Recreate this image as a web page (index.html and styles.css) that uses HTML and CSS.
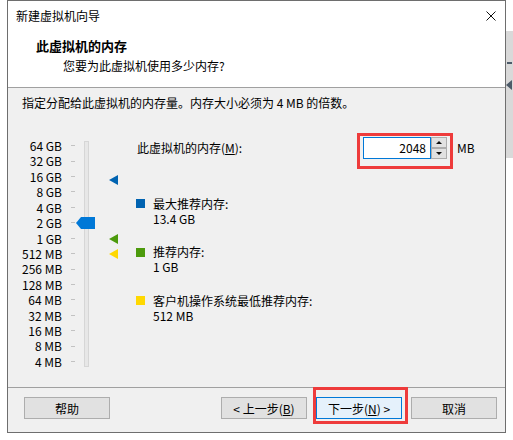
FILE: index.html
```html
<!DOCTYPE html>
<html lang="zh-CN">
<head>
  <meta charset="UTF-8">
  <title>新建虚拟机向导</title>
  <link rel="stylesheet" href="styles.css">
</head>
<body>
  <div class="screen">
    <div class="dialog">
      <div class="titlebar">
        <span>新建虚拟机向导</span>
        <svg class="close" width="10" height="10" viewBox="0 0 10 10">
          <path d="M0.5 0.5 L9.5 9.5 M9.5 0.5 L0.5 9.5" stroke="#111" stroke-width="1" fill="none"/>
        </svg>
      </div>
      <div class="header">
        <div class="header-title">此虚拟机的内存</div>
        <div class="header-sub">您要为此虚拟机使用多少内存?</div>
      </div>

      <div class="content">
        <p class="intro">指定分配给此虚拟机的内存量。内存大小必须为 4 MB 的倍数。</p>
        <div class="main">
          <div class="slider">
            <div class="scale">
              <div class="scale-row"><span class="scale-label">64 GB</span><span class="tick"></span></div>
              <div class="scale-row"><span class="scale-label">32 GB</span><span class="tick"></span></div>
              <div class="scale-row"><span class="scale-label">16 GB</span><span class="tick"></span></div>
              <div class="scale-row"><span class="scale-label">8 GB</span><span class="tick"></span></div>
              <div class="scale-row"><span class="scale-label">4 GB</span><span class="tick"></span></div>
              <div class="scale-row"><span class="scale-label">2 GB</span><span class="tick"></span></div>
              <div class="scale-row"><span class="scale-label">1 GB</span><span class="tick"></span></div>
              <div class="scale-row"><span class="scale-label">512 MB</span><span class="tick"></span></div>
              <div class="scale-row"><span class="scale-label">256 MB</span><span class="tick"></span></div>
              <div class="scale-row"><span class="scale-label">128 MB</span><span class="tick"></span></div>
              <div class="scale-row"><span class="scale-label">64 MB</span><span class="tick"></span></div>
              <div class="scale-row"><span class="scale-label">32 MB</span><span class="tick"></span></div>
              <div class="scale-row"><span class="scale-label">16 MB</span><span class="tick"></span></div>
              <div class="scale-row"><span class="scale-label">8 MB</span><span class="tick"></span></div>
              <div class="scale-row"><span class="scale-label">4 MB</span><span class="tick"></span></div>
            </div>
            <div class="rail">
              <div class="track"></div>
              <svg class="thumb" style="top: 79px" width="19" height="12" viewBox="0 0 19 12">
                <polygon points="0,6 5,0 19,0 19,12 5,12" fill="#0078d7"/>
              </svg>
              <div class="marker marker-max" style="top: 36.5px"></div>
              <div class="marker marker-rec" style="top: 95.5px"></div>
              <div class="marker marker-min" style="top: 110.5px"></div>
            </div>
          </div>

          <div class="settings">
            <div class="memory-row">
              <label class="memory-label">此虚拟机的内存(<u>M</u>):</label>
              <div class="highlight">
                <div class="memory-input">2048</div>
                <div class="spinner">
                  <div class="spin-btn"><span class="arrow-up"></span></div>
                  <div class="spin-btn"><span class="arrow-down"></span></div>
                </div>
              </div>
              <span class="unit">MB</span>
            </div>

            <div class="legend">
              <div class="legend-item">
                <span class="swatch swatch-max"></span>
                <div class="legend-text">
                  <div>最大推荐内存:</div>
                  <div>13.4 GB</div>
                </div>
              </div>
              <div class="legend-item">
                <span class="swatch swatch-rec"></span>
                <div class="legend-text">
                  <div>推荐内存:</div>
                  <div>1 GB</div>
                </div>
              </div>
              <div class="legend-item">
                <span class="swatch swatch-min"></span>
                <div class="legend-text">
                  <div>客户机操作系统最低推荐内存:</div>
                  <div>512 MB</div>
                </div>
              </div>
            </div>
          </div>
        </div>
      </div>

      <div class="footer">
        <button class="btn btn-help">帮助</button>
        <button class="btn btn-back">&lt; 上一步(<u>B</u>)</button>
        <div class="highlight-next">
          <button class="btn btn-primary">下一步(<u>N</u>) &gt;</button>
        </div>
        <button class="btn">取消</button>
      </div>
    </div>

    <div class="side">
      <div class="side-panel">
        <span class="side-dash"></span>
        <span class="side-arrow"></span>
      </div>
    </div>
  </div>
</body>
</html>
```

FILE: styles.css
```css
body {
  margin: 0;
  background: #fff;
  font-family: "Noto Sans CJK SC", "Noto Sans", sans-serif;
  font-size: 12px;
  color: #000;
}

.screen {
  display: flex;
  padding-left: 7px;
  height: 440px;
  overflow: hidden;
}

.dialog {
  width: 499px;
  height: 433px;
  box-sizing: border-box;
  border: 1px solid #6e6e6e;
  background: #f0f0f0;
  display: flex;
  flex-direction: column;
}

.titlebar {
  height: 29px;
  line-height: 29px;
  background: #fff;
  padding-left: 8px;
  display: flex;
  justify-content: space-between;
  align-items: center;
}

.close {
  margin-right: 9px;
}

.header {
  height: 57px;
  background: #fff;
  border-bottom: 1px solid #a0a0a0;
  padding: 7px 0 0 28px;
  box-sizing: border-box;
  height: 58px;
}

.header-title {
  font-size: 13px;
  font-weight: bold;
  line-height: 18px;
}

.header-sub {
  line-height: 16px;
  margin-top: 3px;
  padding-left: 27px;
}

.content {
  flex: 1;
  padding: 7px 0 0 14px;
}

.intro {
  margin: 0;
  line-height: 16px;
}

.main {
  display: flex;
  align-items: flex-start;
  margin-top: 22px;
}

/* slider */
.slider {
  display: flex;
  margin-top: 5px;
}

.scale-row {
  display: flex;
  align-items: center;
  height: 15.43px;
  line-height: 15.43px;
}

.scale-label {
  width: 40px;
  text-align: right;
  white-space: nowrap;
}

.tick {
  width: 4px;
  height: 1px;
  margin-left: 9px;
  background: #c2c2c2;
}

.rail {
  position: relative;
  width: 61px;
}

.track {
  width: 5px;
  height: 226px;
  margin: 3px 0 0 9px;
  box-sizing: border-box;
  border: 1px solid #d6d6d6;
  background: #e7e7e7;
}

.thumb {
  position: absolute;
  left: 1px;
}

.marker {
  position: absolute;
  left: 34px;
  width: 0;
  height: 0;
  border-top: 5px solid transparent;
  border-bottom: 5px solid transparent;
  border-right: 9px solid;
}

.marker-max { border-right-color: #0063b1; }
.marker-rec { border-right-color: #4c9a0c; }
.marker-min { border-right-color: #ffd800; }

/* settings */
.settings {
  flex: 1;
}

.memory-row {
  display: flex;
  align-items: flex-start;
}

.memory-label {
  width: 220px;
  padding-left: 1px;
  margin-top: 4px;
  line-height: 22px;
}

.highlight {
  display: flex;
  border: 3px solid #ee3b3b;
  padding: 1px 3px 7px 3px;
}

.memory-input {
  width: 68px;
  height: 22px;
  box-sizing: border-box;
  border: 1px solid #0078d7;
  background: #fff;
  text-align: right;
  padding-right: 4px;
  line-height: 20px;
}

.spinner {
  width: 16px;
  height: 22px;
  display: flex;
  flex-direction: column;
}

.spin-btn {
  height: 11px;
  box-sizing: border-box;
  border: 1px solid #adadad;
  background: #e1e1e1;
  display: flex;
  align-items: center;
  justify-content: center;
}

.arrow-up,
.arrow-down {
  width: 0;
  height: 0;
  border-left: 3px solid transparent;
  border-right: 3px solid transparent;
}

.arrow-up { border-bottom: 3px solid #111; }
.arrow-down { border-top: 3px solid #111; }

.unit {
  margin: 4px 0 0 4px;
  line-height: 22px;
}

.legend {
  margin-top: 26.5px;
}

.legend-item {
  display: flex;
  margin-bottom: 18.5px;
}

.swatch {
  width: 9px;
  height: 9px;
  margin-top: 3.5px;
}

.swatch-max { background: #0063b1; }
.swatch-rec { background: #4c9a0c; }
.swatch-min { background: #ffd800; }

.legend-text {
  margin-left: 8px;
  line-height: 15px;
}

/* footer */
.footer {
  display: flex;
  align-items: flex-start;
  border-top: 1px solid #a0a0a0;
  padding: 9px 8px 8px 8px;
}

.btn {
  width: 86px;
  height: 22px;
  padding: 0;
  border: 1px solid #adadad;
  background: #e1e1e1;
  font-family: inherit;
  font-size: 12px;
  color: #000;
}

.btn-help {
  margin-left: 8px;
}

.btn-back {
  margin-left: auto;
  margin-right: 6px;
}

.btn-primary {
  border-color: #0078d7;
  background: #e5f1fb;
}

.highlight-next {
  margin: -10px 3px 0 0;
  border: 3px solid #ee3b3b;
  padding: 7px 3px 2px 0;
  display: flex;
}

/* part of the window behind the dialog */
.side {
  flex: 1;
}

.side-panel {
  margin-top: 31px;
  height: 127px;
  background: #d9d9d9;
  position: relative;
}

.side-dash {
  position: absolute;
  left: 1px;
  top: 31px;
  width: 5px;
  height: 2px;
  background: #4d5b69;
}

.side-arrow {
  position: absolute;
  left: 0;
  top: 49px;
  width: 0;
  height: 0;
  border-top: 5px solid transparent;
  border-bottom: 5px solid transparent;
  border-right: 6px solid #4d5b69;
}
```
